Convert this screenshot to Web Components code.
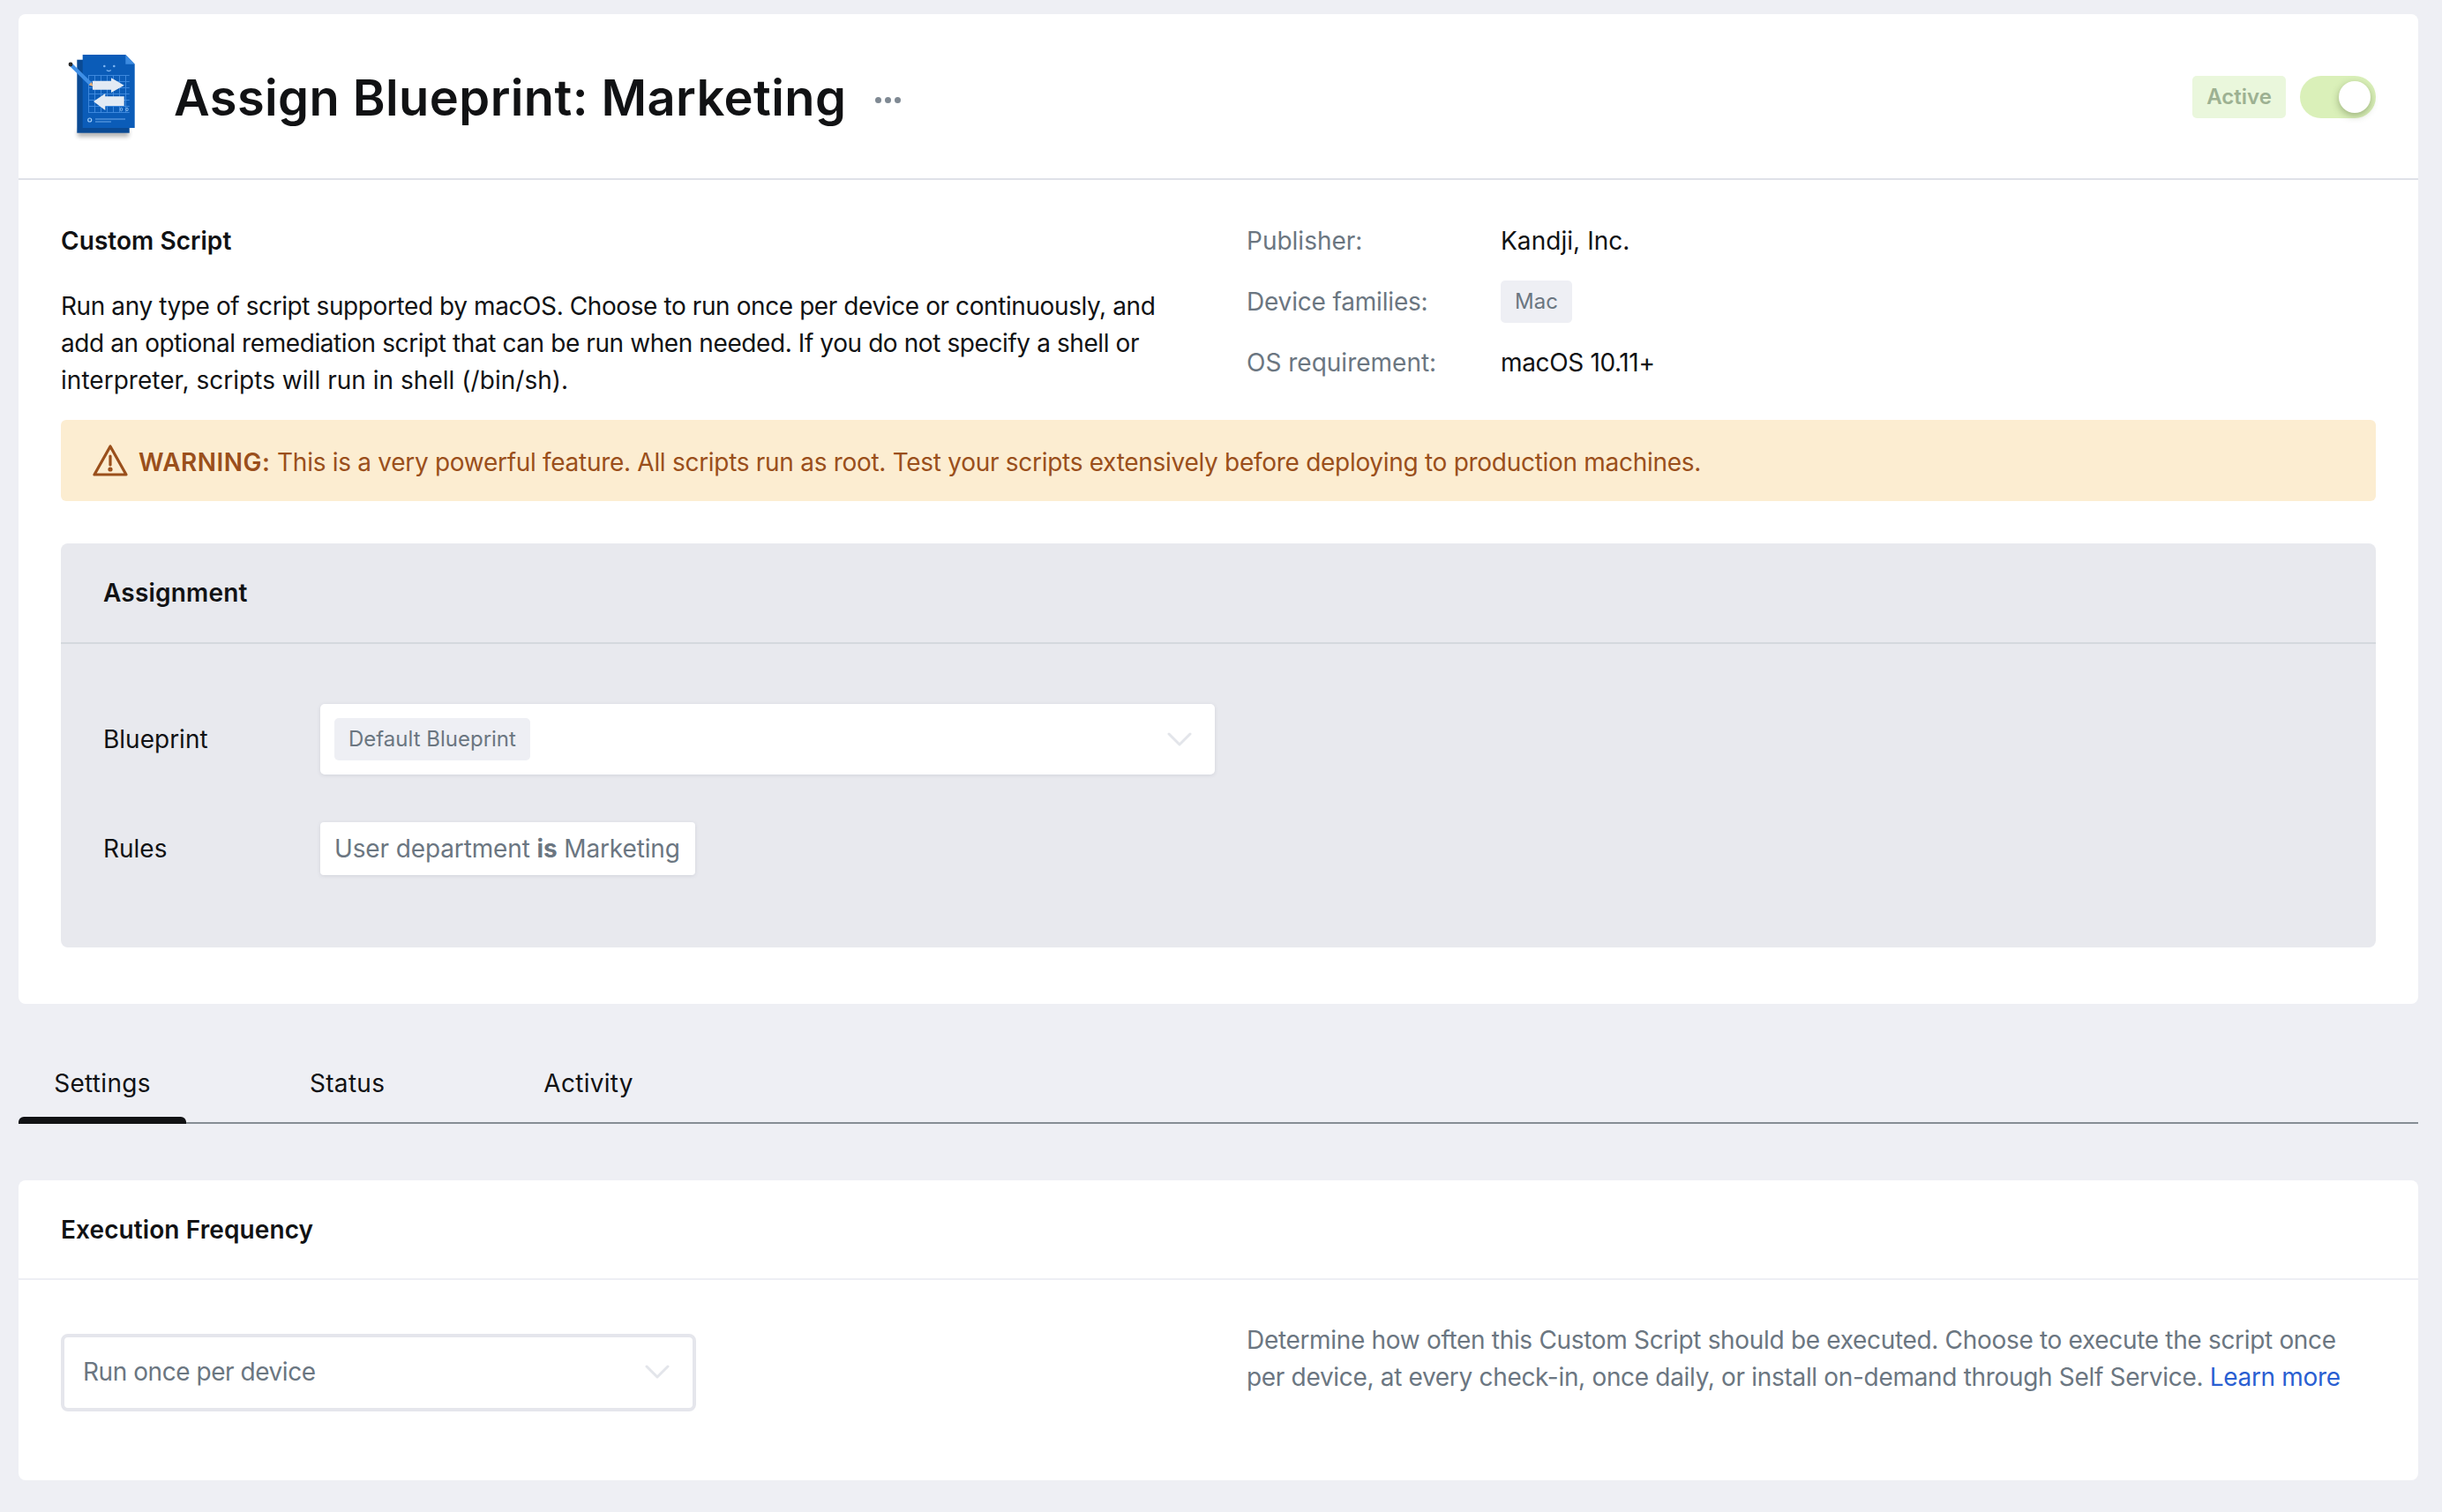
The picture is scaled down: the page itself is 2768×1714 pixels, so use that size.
<!DOCTYPE html>
<html>
<head>
<meta charset="utf-8">
<title>Assign Blueprint: Marketing</title>
<style>
  body {
    margin: 0;
    background: #eeeff4;
    color: #111214;
    font-family: Inter, "Liberation Sans", sans-serif;
    font-size: 28px;
    line-height: 42px;
    letter-spacing: -0.35px;
  }
</style>
</head>
<body>

<library-page>
  <info-card>
    <title-bar slot="top" heading="Assign Blueprint: Marketing"></title-bar>
    <item-summary></item-summary>
    <warning-banner><b>WARNING:</b> This is a very powerful feature. All scripts run as root. Test your scripts extensively before deploying to production machines.</warning-banner>
    <assignment-panel></assignment-panel>
  </info-card>
  <tab-bar></tab-bar>
  <frequency-card></frequency-card>
</library-page>

<script>
const chevron = `<svg width="28" height="16" viewBox="0 0 28 16" fill="none" stroke="#e3e5ea" stroke-width="3" stroke-linecap="round" stroke-linejoin="round"><path d="M2 2l12 12L26 2"/></svg>`

class LibraryPage extends HTMLElement {
    constructor() {
        super();
        this.attachShadow({ mode: 'open' })
        this.shadowRoot.innerHTML = `
            <style>
                :host {
                    display: flex;
                    flex-direction: column;
                    padding: 16px 27px 36px 21px;
                }
            </style>
            <slot></slot>
        `;
    }
}

class InfoCard extends HTMLElement {
    constructor() {
        super();
        this.attachShadow({ mode: 'open' })
        this.shadowRoot.innerHTML = `
            <style>
                :host {
                    display: block;
                    background: #fff;
                    border-radius: 8px;
                }
                .body {
                    display: flex;
                    flex-direction: column;
                    padding: 48px 48px 64px;
                }
            </style>
            <slot name="top"></slot>
            <div class="body"><slot></slot></div>
        `;
    }
}

class TitleBar extends HTMLElement {
    constructor() {
        super();
        this.attachShadow({ mode: 'open' })
        this.shadowRoot.innerHTML = `
            <style>
                :host {
                    display: flex;
                    align-items: center;
                    height: 184px;
                    padding: 2px 48px 0 49px;
                    border-bottom: 2px solid #dfe1e8;
                }
                svg.logo { flex: none; width: 92px; height: 100px; margin-top: -6px; overflow: visible; }
                h1 {
                    margin: 2px 0 0 35px;
                    font-size: 56px;
                    font-weight: 600;
                    line-height: 70px;
                    letter-spacing: 0.4px;
                    color: #111214;
                }
                .dots { display: flex; gap: 4px; margin-left: 33px; margin-top: 6px; }
                .dots i { width: 7px; height: 7px; border-radius: 50%; background: #7f8993; }
                .right { display: flex; align-items: center; gap: 16px; margin-left: auto; }
                .status {
                    width: 106px;
                    height: 48px;
                    box-sizing: border-box;
                    display: flex;
                    align-items: center;
                    justify-content: center;
                    border-radius: 5px;
                    background: #eaf7dc;
                    color: #9db192;
                    font-size: 24px;
                    font-weight: 600;
                    letter-spacing: 0;
                }
                .toggle {
                    position: relative;
                    width: 86px;
                    height: 48px;
                    border-radius: 24px;
                    background: #daf0b9;
                }
                .toggle::after {
                    content: "";
                    position: absolute;
                    right: 6px;
                    top: 6px;
                    width: 36px;
                    height: 36px;
                    border-radius: 50%;
                    background: #fff;
                    box-shadow: 0 3px 8px rgba(80, 100, 50, .45);
                }
            </style>
            <svg class="logo" viewBox="0 0 92 100">
                <defs>
                    <filter id="sh" x="-20%" y="-60%" width="140%" height="220%"><feGaussianBlur stdDeviation="2.5"/></filter>
                </defs>
                <rect x="18" y="90" width="58" height="8" fill="#000" opacity=".3" filter="url(#sh)"/>
                <rect x="17.3" y="10.7" width="59.4" height="83" fill="#0a4a94"/>
                <path d="M23.7 5H72.3L82.7 15.7V88H23.7z" fill="#0b5cb8"/>
                <path d="M72.3 5L82.7 15.7H72.3z" fill="#3d8be0"/>
                <circle cx="48.3" cy="18" r="1.3" fill="#7fb6f2"/>
                <circle cx="59.3" cy="18" r="1.3" fill="#7fb6f2"/>
                <path d="M50.8 22.5q2.5 2 5 0" fill="none" stroke="#7fb6f2" stroke-width="1.3"/>
                <g stroke="#4c94e6" stroke-width=".9" opacity=".85">
                    <path d="M30 28.5h46.7M30 35.5h46.7M30 42.5h46.7M30 49.5h46.7M30 56.5h46.7M30 63.5h46.7M30 70.5h46.7"/>
                    <path d="M30.5 28v43M37.5 28v43M44.5 28v43M51.5 28v43M58.5 28v43M65.5 28v43M72.5 28v43"/>
                </g>
                <path d="M35 34.7H56V31.3L70.7 39.7 56 48V44.7H35z" fill="#e2eaf4"/>
                <path d="M70.7 52.3H49.3V49L36 58 49.3 68V63H70.7z" fill="#e2eaf4"/>
                <ellipse cx="67.5" cy="67" rx="1.2" ry="1.8" fill="none" stroke="#9fcbf7" stroke-width=".8"/>
                <ellipse cx="74" cy="67" rx="1.2" ry="1.8" fill="none" stroke="#9fcbf7" stroke-width=".8"/>
                <path d="M11.5 14.5L34 36.5 31 39.5 8.5 17.5z" fill="#3f8fe6"/>
                <path d="M30.6 39.2L34 36 35.4 41z" fill="#f1b274"/>
                <circle cx="10" cy="16" r="2.4" fill="#2a2a2a"/>
                <circle cx="31.7" cy="79" r="2" fill="none" stroke="#9fcbf7" stroke-width="1.2"/>
                <path d="M38 78h34M38 81h18" stroke="#6fa9ea" stroke-width="1"/>
            </svg>
            <h1></h1>
            <span class="dots"><i></i><i></i><i></i></span>
            <div class="right">
                <span class="status">Active</span>
                <span class="toggle"></span>
            </div>
        `;
    }

    connectedCallback() {
        this.shadowRoot.querySelector('h1').textContent = this.getAttribute('heading');
    }
}

class ItemSummary extends HTMLElement {
    constructor() {
        super();
        this.attachShadow({ mode: 'open' })
        this.shadowRoot.innerHTML = `
            <style>
                :host {
                    display: grid;
                    grid-template-columns: 1344px 1fr;
                    margin-bottom: 24px;
                }
                h2 { margin: 0 0 32px; font-size: 28px; font-weight: 600; line-height: 42px; letter-spacing: 0.05px; }
                p { margin: 0; letter-spacing: -0.41px; }
                p span { letter-spacing: 0.03px; }
                dl {
                    margin: 0;
                    display: grid;
                    grid-template-columns: 288px 1fr;
                    grid-auto-rows: 42px;
                    row-gap: 27px;
                    align-items: center;
                    justify-items: start;
                }
                dt { color: #6b7681; letter-spacing: 0; }
                dt.tight { letter-spacing: -0.18px; }
                dd { margin: 0; }
                dd.name { letter-spacing: 0.05px; }
                pill-tag { height: 48px; padding: 0 16px; }
            </style>
            <div>
                <h2>Custom Script</h2>
                <p>Run any type of script supported by macOS. Choose to run once per device or continuously, and<br>add an optional remediation script that can be run when needed. If you do not specify a shell or<br><span>interpreter, scripts will run in shell (/bin/sh).</span></p>
            </div>
            <dl>
                <dt>Publisher:</dt><dd class="name">Kandji, Inc.</dd>
                <dt class="tight">Device families:</dt><dd><pill-tag>Mac</pill-tag></dd>
                <dt>OS requirement:</dt><dd>macOS 10.11+</dd>
            </dl>
        `;
    }
}

class PillTag extends HTMLElement {
    constructor() {
        super();
        this.attachShadow({ mode: 'open' })
        this.shadowRoot.innerHTML = `
            <style>
                :host {
                    display: inline-flex;
                    align-items: center;
                    box-sizing: border-box;
                    border-radius: 5px;
                    background: #eeeff4;
                    color: #6b7681;
                    font-size: 24px;
                    letter-spacing: 0;
                }
            </style>
            <slot></slot>
        `;
    }
}

class WarningBanner extends HTMLElement {
    constructor() {
        super();
        this.attachShadow({ mode: 'open' })
        this.shadowRoot.innerHTML = `
            <style>
                :host {
                    display: flex;
                    align-items: center;
                    gap: 12px;
                    height: 92px;
                    padding: 0 36px;
                    margin-bottom: 48px;
                    border-radius: 6px;
                    background: #fcedd1;
                    color: #9a4f1b;
                    letter-spacing: -0.29px;
                }
                ::slotted(b) { font-weight: 600; letter-spacing: 0.5px; }
                span { padding-top: 3px; }
            </style>
            <svg width="40" height="36" viewBox="0 0 40 36" fill="none" stroke="#9a4f1b" stroke-width="3.2" stroke-linejoin="round" stroke-linecap="round">
                <path d="M20 2L2 34h36z"/>
                <path d="M20 13v10"/>
                <circle cx="20" cy="28" r="1" fill="#9a4f1b"/>
            </svg>
            <span><slot></slot></span>
        `;
    }
}

class AssignmentPanel extends HTMLElement {
    constructor() {
        super();
        this.attachShadow({ mode: 'open' })
        this.shadowRoot.innerHTML = `
            <style>
                :host {
                    display: block;
                    background: #e8e9ee;
                    border-radius: 8px;
                }
                header {
                    height: 114px;
                    box-sizing: border-box;
                    display: flex;
                    align-items: center;
                    padding-left: 48px;
                    border-bottom: 2px solid #d4d8dd;
                    font-weight: 600;
                    letter-spacing: 0.2px;
                }
                .rows {
                    display: grid;
                    grid-template-columns: 246px auto;
                    justify-content: start;
                    align-items: center;
                    row-gap: 54px;
                    padding: 68px 48px 82px;
                    letter-spacing: 0;
                }
                .select {
                    width: 1014px;
                    height: 80px;
                    box-sizing: border-box;
                    display: flex;
                    align-items: center;
                    justify-content: space-between;
                    padding: 0 26px 0 16px;
                    background: #fff;
                    border-radius: 5px;
                    box-shadow: 0 1px 4px rgba(60, 70, 90, .13);
                }
                pill-tag { height: 48px; padding: 0 16px; }
                .rule {
                    justify-self: start;
                    width: 425px;
                    height: 60px;
                    box-sizing: border-box;
                    display: flex;
                    align-items: center;
                    padding-left: 16px;
                    background: #fff;
                    border-radius: 4px;
                    color: #6b7681;
                    white-space: pre;
                    letter-spacing: -0.13px;
                    box-shadow: 0 1px 4px rgba(60, 70, 90, .13);
                }
                .rule b { font-weight: 700; }
            </style>
            <header>Assignment</header>
            <div class="rows">
                <span>Blueprint</span>
                <div class="select"><pill-tag>Default Blueprint</pill-tag>${chevron}</div>
                <span>Rules</span>
                <div class="rule">User department <b>is</b> Marketing</div>
            </div>
        `;
    }
}

class TabBar extends HTMLElement {
    constructor() {
        super();
        this.attachShadow({ mode: 'open' })
        this.shadowRoot.innerHTML = `
            <style>
                :host {
                    display: flex;
                    gap: 100px;
                    margin-top: 69px;
                    border-bottom: 2px solid #858d94;
                    letter-spacing: 0.3px;
                }
                span {
                    position: relative;
                    padding: 0 40px 23px;
                }
                .on { width: 110px; text-align: center; white-space: nowrap; }
                .on::after {
                    content: "";
                    position: absolute;
                    left: 0;
                    right: 0;
                    bottom: -2px;
                    height: 8px;
                    border-radius: 6px 6px 0 0;
                    background: #111214;
                }
            </style>
            <span class="on">Settings</span>
            <span>Status</span>
            <span>Activity</span>
        `;
    }
}

class FrequencyCard extends HTMLElement {
    constructor() {
        super();
        this.attachShadow({ mode: 'open' })
        this.shadowRoot.innerHTML = `
            <style>
                :host {
                    display: block;
                    margin-top: 64px;
                    background: #fff;
                    border-radius: 8px;
                }
                header {
                    height: 113px;
                    box-sizing: border-box;
                    display: flex;
                    align-items: center;
                    padding-left: 48px;
                    border-bottom: 2px solid #eeeff4;
                    font-weight: 600;
                    letter-spacing: 0.1px;
                }
                .body {
                    display: grid;
                    grid-template-columns: 1344px 1fr;
                    padding: 47px 48px 78px;
                }
                .select {
                    width: 720px;
                    height: 88px;
                    margin-top: 14px;
                    box-sizing: border-box;
                    display: flex;
                    align-items: center;
                    justify-content: space-between;
                    padding: 0 26px 2px 21px;
                    border: 4px solid #e5e6ec;
                    border-radius: 8px;
                    color: #6b7681;
                    letter-spacing: -0.45px;
                }
                p { margin: 0; color: #6b7681; letter-spacing: -0.32px; }
                a { color: #2a5fd2; text-decoration: none; }
            </style>
            <header>Execution Frequency</header>
            <div class="body">
                <div class="select">Run once per device${chevron}</div>
                <p>Determine how often this Custom Script should be executed. Choose to execute the script once<br>per device, at every check-in, once daily, or install on-demand through Self Service. <a href="#">Learn more</a></p>
            </div>
        `;
    }
}

customElements.define('pill-tag', PillTag)
customElements.define('title-bar', TitleBar)
customElements.define('item-summary', ItemSummary)
customElements.define('warning-banner', WarningBanner)
customElements.define('assignment-panel', AssignmentPanel)
customElements.define('tab-bar', TabBar)
customElements.define('frequency-card', FrequencyCard)
customElements.define('info-card', InfoCard)
customElements.define('library-page', LibraryPage)
</script>
</body>
</html>
